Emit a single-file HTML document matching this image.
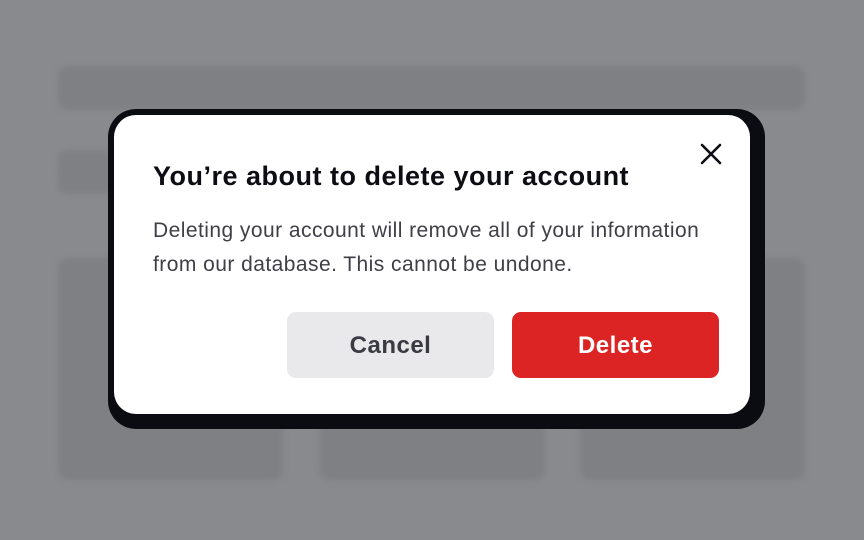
<!DOCTYPE html>
<html><head><style>
body{margin:0;width:864px;height:540px;background:#898a8e;position:relative;overflow:hidden;font-family:"Liberation Sans",sans-serif}
.b{position:absolute;background:#7f8084;border-radius:10px;filter:blur(3px)}
.sh{position:absolute;left:108px;top:109px;width:657px;height:320px;background:#0b0b12;border-radius:28px}
.card{position:absolute;left:114px;top:115px;width:636px;height:299px;background:#fff;border-radius:22px}
h1{position:absolute;left:39px;top:46px;margin:0;font-size:27px;letter-spacing:0.5px;font-weight:700;color:#0d0d14;white-space:nowrap}
p{position:absolute;left:39px;top:99px;margin:0;font-size:21px;letter-spacing:0.45px;line-height:34px;color:#3f3f46;width:570px}
.btn{position:absolute;top:197px;width:207px;height:66px;border-radius:9px;font-size:24px;letter-spacing:0.5px;font-weight:700;text-align:center;line-height:67px}
</style></head><body>
<div class="b" style="left:58px;top:66px;width:747px;height:44px"></div>
<div class="b" style="left:58px;top:150px;width:60px;height:44px"></div>
<div class="b" style="left:58px;top:258px;width:225px;height:222px"></div>
<div class="b" style="left:320px;top:258px;width:225px;height:222px"></div>
<div class="b" style="left:580px;top:258px;width:225px;height:222px"></div>
<div class="sh"></div>
<div class="card">
<h1>You’re about to delete your account</h1>
<svg style="position:absolute;left:586px;top:28px" width="22" height="22" viewBox="0 0 22 22"><path d="M2 2L20 20M20 2L2 20" stroke="#0d0d14" stroke-width="2.6" stroke-linecap="round"/></svg>
<p>Deleting your account will remove all of your information from our database. This cannot be undone.</p>
<div class="btn" style="left:173px;background:#e9e9ec;color:#3a3a42">Cancel</div>
<div class="btn" style="left:398px;background:#dc2424;color:#fff">Delete</div>
</div>
</body></html>
